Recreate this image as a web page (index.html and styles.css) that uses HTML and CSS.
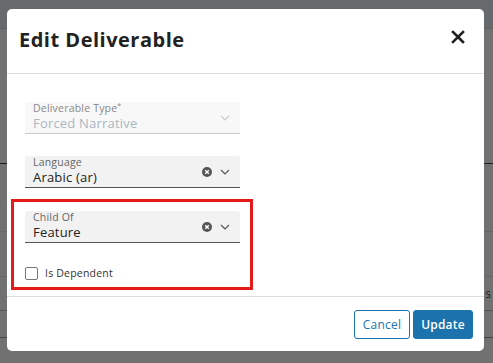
FILE: index.html
```html
<!DOCTYPE html>
<html lang="en">
<head>
    <meta charset="UTF-8">
    <title>Edit Deliverable</title>
    <link rel="stylesheet" href="styles.css">
</head>
<body>

<div class="page">
    <div class="topbar"></div>
    <div class="rows">
        <div class="row r1"></div>
        <div class="row r2"></div>
        <div class="row r3"></div>
        <div class="row r4"><span class="cell">s</span></div>
        <div class="row r5"></div>
    </div>
</div>

<div class="modal">
    <div class="modal-head">
        <h1>Edit Deliverable</h1>
        <svg class="close" width="14" height="14" viewBox="0 0 14 14"><path d="M2 2 L12 12 M12 2 L2 12" stroke="#222" stroke-width="2.6" stroke-linecap="square"/></svg>
    </div>

    <div class="modal-body">
        <div class="field disabled">
            <div class="field-text">
                <span class="label">Deliverable Type<sup>*</sup></span>
                <span class="value">Forced Narrative</span>
            </div>
            <svg class="chev" width="10" height="6" viewBox="0 0 10 6"><path d="M1 1 L5 5 L9 1" fill="none" stroke="#ccc" stroke-width="1.2"/></svg>
        </div>

        <div class="field">
            <div class="field-text">
                <span class="label">Language</span>
                <span class="value">Arabic (ar)</span>
            </div>
            <svg class="clear" width="10" height="10" viewBox="0 0 10 10"><circle cx="5" cy="5" r="5" fill="#555"/><path d="M3.2 3.2 L6.8 6.8 M6.8 3.2 L3.2 6.8" stroke="#fff" stroke-width="1.4"/></svg>
            <svg class="chev" width="10" height="6" viewBox="0 0 10 6"><path d="M1 1 L5 5 L9 1" fill="none" stroke="#555" stroke-width="1.2"/></svg>
        </div>

        <div class="marked">
            <div class="field">
                <div class="field-text">
                    <span class="label">Child Of</span>
                    <span class="value">Feature</span>
                </div>
                <svg class="clear" width="10" height="10" viewBox="0 0 10 10"><circle cx="5" cy="5" r="5" fill="#555"/><path d="M3.2 3.2 L6.8 6.8 M6.8 3.2 L3.2 6.8" stroke="#fff" stroke-width="1.4"/></svg>
                <svg class="chev" width="10" height="6" viewBox="0 0 10 6"><path d="M1 1 L5 5 L9 1" fill="none" stroke="#555" stroke-width="1.2"/></svg>
            </div>
            <label class="check"><span class="box"></span>Is Dependent</label>
        </div>
    </div>

    <div class="modal-foot">
        <button class="btn cancel">Cancel</button>
        <button class="btn update">Update</button>
    </div>
</div>

</body>
</html>
```

FILE: styles.css
```css
html, body { margin: 0; height: 100%; }
body { font-family: 'Open Sans', sans-serif; background: #6e6f71; overflow: hidden; }

.page       { height: 100%; display: flex; flex-direction: column; }
.topbar     { height: 28px; background: #676a6d; border-bottom: 1px solid #5f6264; }
.rows       { flex: 1; display: flex; flex-direction: column; background: #717171; }
.row        { box-sizing: border-box; border-bottom: 1px solid #5e5e5e; font-size: 12px; color: #222; text-align: right; padding-right: 2px; }
.row.r1     { height: 135px; border-bottom-color: #1e1e1e; }
.row.r2     { height: 68px; border-bottom-color: #666; }
.row.r3     { height: 45px; border-bottom-color: #666; }
.row.r4     { height: 34px; line-height: 34px; border-bottom-color: #555; }
.row.r5     { height: 27px; border-bottom-color: #444; }

.modal      { position: absolute; left: 7px; top: 9px; width: 477px; height: 342px; background: #fff; border-radius: 5px; display: flex; flex-direction: column; }

.modal-head { box-sizing: border-box; height: 65px; border-bottom: 1px solid #dedede; display: flex; align-items: center; justify-content: space-between; padding: 0 19px 4px 12px; }
.modal-head h1 { margin: 0; font-size: 20px; font-weight: 700; color: #222; letter-spacing: 0.5px; }
.close      { margin-top: -4px; }

.modal-body { flex: 1; padding: 28px 0 0 18px; }

.field      { box-sizing: border-box; width: 215px; height: 32px; background: #f2f2f2; border-bottom: 1px solid #555; border-radius: 3px 3px 0 0; display: flex; align-items: center; padding: 0 10px 0 8px; margin-bottom: 22px; }
.field-text { flex: 1; display: flex; flex-direction: column; padding-bottom: 1px; }
.label      { font-size: 10.5px; line-height: 13px; color: #666; letter-spacing: 0.2px; }
.label sup  { font-size: 7px; line-height: 0; }
.value      { font-size: 13px; line-height: 17px; color: #222; letter-spacing: 0.2px; }
.clear      { margin-right: 8px; }

.field.disabled        { background: #f8f8f8; border-bottom-color: #ccc; }
.field.disabled .label { color: #888; }
.field.disabled .value { color: #aab6c2; }

.marked     { box-sizing: border-box; width: 242px; margin: -11px 0 0 -14px; border: 3px solid #e41b1b; padding: 9px 10px 7px 11px; }
.marked .field { margin-bottom: 23px; }

.check      { display: flex; align-items: center; font-size: 10.5px; color: #333; letter-spacing: 0.2px; }
.box        { box-sizing: border-box; width: 13px; height: 13px; border: 1px solid #777; border-radius: 2px; margin-right: 7px; }

.modal-foot { box-sizing: border-box; height: 55px; border-top: 1px solid #dedede; display: flex; justify-content: flex-end; align-items: center; gap: 3px; padding: 0 11px; }
.btn        { box-sizing: border-box; height: 29px; padding: 0; font-family: 'Open Sans', sans-serif; font-size: 12px; letter-spacing: 0.2px; border-radius: 3px; border: 1px solid #1b74b0; cursor: pointer; }
.btn.cancel { width: 56px; background: #fff; color: #1b74b0; }
.btn.update { width: 60px; background: #1b72ad; color: #fff; font-weight: 600; }
```
